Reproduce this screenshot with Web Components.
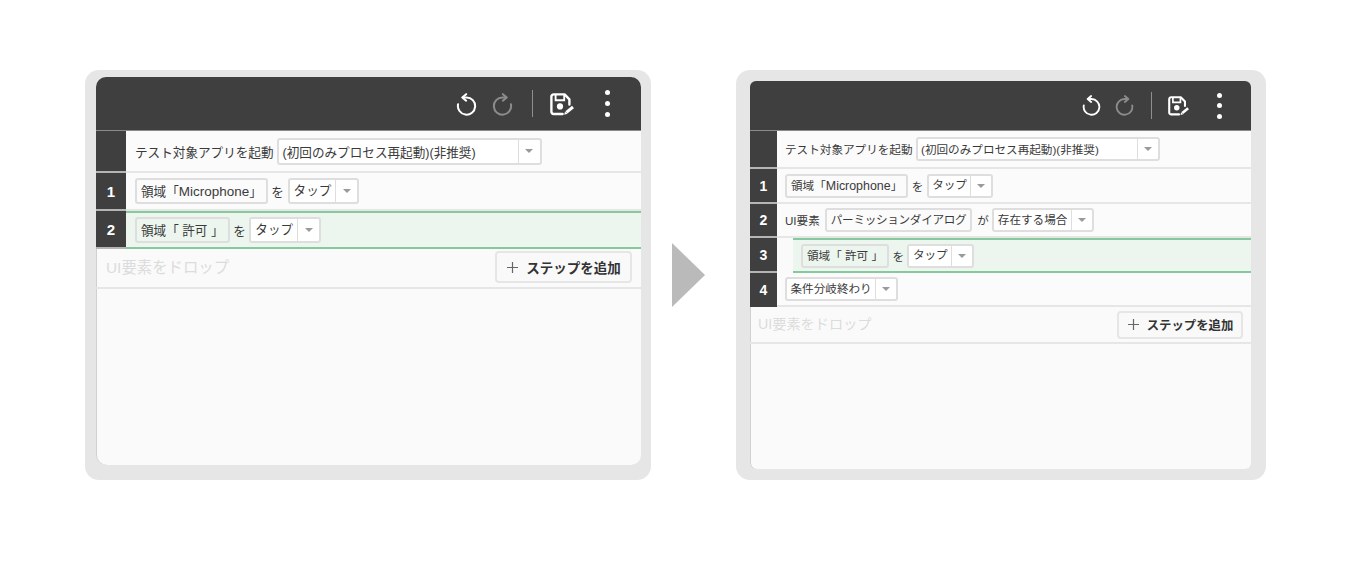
<!DOCTYPE html>
<html lang="ja">
<head>
<meta charset="utf-8">
<title>steps</title>
<style>
  html, body { margin: 0; background: #fff; }
  body { font-family: "Liberation Sans", "Noto Sans CJK JP", sans-serif; color: #3a3a3a; }
  main { display: flex; align-items: flex-start; padding: 70px 0 0 85px; }
  .lat { font-size: 1.07em; }
</style>
</head>
<body>
<main>
  <step-frame size="large">
    <step-row h="42">
      <span>テスト対象アプリを起動</span>
      <step-select w="265" style="margin-left:3px;height:27px;--top:0px">(初回のみプロセス再起動)(非推奨)</step-select>
    </step-row>
    <step-row n="1" h="38">
      <step-tag>領域「<span class="lat">Microphone</span>」</step-tag><span class="p">を</span><step-select style="--top:-2px">タップ</step-select>
    </step-row>
    <step-row n="2" h="38" active>
      <step-tag>領域「 許可 」</step-tag><span class="p">を</span><step-select style="--top:-2px">タップ</step-select>
    </step-row>
    <step-drop h="40">ステップを追加</step-drop>
  </step-frame>

  <step-arrow></step-arrow>

  <step-frame size="small">
    <step-row h="38">
      <span>テスト対象アプリを起動</span>
      <step-select w="244" style="margin-left:3px;--top:0px">(初回のみプロセス再起動)(非推奨)</step-select>
    </step-row>
    <step-row n="1" h="35">
      <step-tag>領域「<span class="lat">Microphone</span>」</step-tag><span class="p">を</span><step-select style="--top:-2px">タップ</step-select>
    </step-row>
    <step-row n="2" h="34">
      <span style="margin-right:5px">UI要素</span><step-tag style="letter-spacing:-.3px;margin-right:1.6px">パーミッションダイアログ</step-tag><span class="p">が</span><step-select>存在する場合</step-select>
    </step-row>
    <step-row n="3" h="35" active indent>
      <step-tag>領域「 許可 」</step-tag><span class="p">を</span><step-select style="--top:-2px">タップ</step-select>
    </step-row>
    <step-row n="4" h="34" last>
      <step-select>条件分岐終わり</step-select>
    </step-row>
    <step-drop h="37">ステップを追加</step-drop>
  </step-frame>
</main>

<script>
// toolbar icons
const undoIcon = `<svg viewBox="0 0 24 24" fill="none" stroke="currentColor" stroke-width="2.1" stroke-linecap="round" stroke-linejoin="round">
  <path d="M8.5 4.6H12a9 9 0 1 1-8.8 7.2"/>
  <path d="M11.6 1.2 7.6 4.6l4 3.4"/></svg>`;

const saveIcon = `<svg viewBox="0 0 24 23" fill="none">
  <path d="M19.4 11.5V6.4L14.6 1.4H3.6a2.2 2.2 0 0 0-2.2 2.2v15.2a2.2 2.2 0 0 0 2.2 2.2h9" stroke="#fff" stroke-width="2.4" stroke-linecap="round" stroke-linejoin="round"/>
  <path d="M5.6 2v5.2h8.6V2" stroke="#fff" stroke-width="1.9"/>
  <circle cx="10" cy="13.4" r="3.1" fill="#fff"/>
  <path d="M23 14 16.4 19.4" stroke="#fff" stroke-width="3"/>
  <path d="M14.2 21.8l.8-3.2 2.5 2.2z" fill="#fff"/>
</svg>`;

class StepFrame extends HTMLElement {
  constructor() {
    super();
    this.attachShadow({ mode: "open" }).innerHTML = `
      <style>
      :host { display: block; box-sizing: border-box; background: #e6e6e6; border-radius: 14px; flex: none; }
      :host([size="large"]) {
        width: 566px; height: 410px; padding: 7px 10px 15px 11px;
        --fs: 12.6px; --tool: 54px; --gutter: 30px; --pad: 9px; --num: 15px; --arrow: 21px; --sel-h: 26px; --sel-pad: 4px;
        --btn-w: 137px; --btn-h: 32px; --btn-r: 9px; --btn-fs: 13.5px; --drop-l: 10px; --drop-fs: 15.4px; --drop-pb: 2px; --hint-top: -1px; --p-gap: 3.6px;
      }
      :host([size="small"]) {
        width: 530px; height: 410px; padding: 11px 15px 11px 14px;
        --fs: 11.6px; --tool: 50px; --gutter: 27px; --pad: 8px; --num: 14px; --arrow: 20px; --sel-h: 24px; --sel-pad: 3.5px;
        --btn-w: 126px; --btn-h: 28px; --btn-r: 8px; --btn-fs: 12.4px; --drop-l: 8px; --drop-fs: 14.2px; --drop-pb: 0px; --hint-top: -2px; --p-gap: 3.4px;
      }
      .panel { height: 100%; background: #fafafa; border-radius: 10px; overflow: hidden; box-shadow: inset 1px 0 0 #d0d0d0; font-size: var(--fs); }
      :host([size="small"]) .panel { border-radius: 6px; }
      </style>
      <div class="panel">
        <step-toolbar size="${this.getAttribute("size")}"></step-toolbar>
        <slot></slot>
      </div>`;
  }
}

class StepToolbar extends HTMLElement {
  constructor() {
    super();
    this.attachShadow({ mode: "open" }).innerHTML = `
      <style>
      :host { display: flex; align-items: center; justify-content: flex-end; box-sizing: border-box; height: var(--tool); background: #3f3f3f; border-bottom: 1px solid #8a8a8a; color: #fff; }
      svg { display: block; }
      .undo, .redo { width: 23px; height: 23px; margin-top: 2px; }
      .redo { color: #8c8c8c; transform: scaleX(-1); margin-left: 13px; }
      .sep { width: 1px; height: 27px; background: #8f8f8f; margin: 0 17px 0 18px; }
      .save { width: 24px; height: 23px; margin-top: 2px; }
      .more { display: flex; flex-direction: column; gap: 6px; margin-left: 31px; margin-right: 31px; }
      .more i { display: block; width: 5px; height: 5px; border-radius: 50%; background: #fff; }
      :host([size="small"]) .undo, :host([size="small"]) .redo { width: 21px; height: 21px; margin-top: 0; }
      :host([size="small"]) .redo { margin-left: 12px; }
      :host([size="small"]) .sep { margin: 0 16px 0 16px; }
      :host([size="small"]) .save { width: 21px; height: 20px; margin-top: 1px; }
      :host([size="small"]) .more { gap: 5.5px; margin-left: 28px; margin-right: 29px; }
      </style>
      <span class="undo">${undoIcon}</span>
      <span class="redo">${undoIcon}</span>
      <span class="sep"></span>
      <span class="save">${saveIcon}</span>
      <span class="more"><i></i><i></i><i></i></span>`;
  }
}

class StepRow extends HTMLElement {
  constructor() {
    super();
    this.attachShadow({ mode: "open" }).innerHTML = `
      <style>
      :host { display: flex; box-sizing: border-box; align-items: stretch; }
      .num { box-sizing: border-box; flex: none; width: var(--gutter); background: #3f3f3f; border-bottom: 2px solid #b5b5b5; color: #fff; font-weight: bold; font-size: var(--num); display: flex; align-items: center; justify-content: center; }
      .body { flex: 1; min-width: 0; box-sizing: border-box; display: flex; align-items: center; padding-left: var(--pad); border-bottom: 2px solid #e6e6e6; background: #fbfbfb; }
      :host([last]) .num { border-bottom: 0; }
      :host([active]) .body { background: #ecf5ee; border-top: 2px solid #86c99c; border-bottom: 2px solid #86c99c; --tag-bg: #ecf5ee; }
      :host([indent]) .body { margin-left: 16px; }
      ::slotted(.p) { margin: 0 var(--p-gap); }
      </style>
      <div class="num"></div>
      <div class="body"><slot></slot></div>`;
  }
  connectedCallback() {
    this.style.height = this.getAttribute("h") + "px";
    this.shadowRoot.querySelector(".num").textContent = this.getAttribute("n") || "";
  }
}

class StepTag extends HTMLElement {
  constructor() {
    super();
    this.attachShadow({ mode: "open" }).innerHTML = `
      <style>
      :host { display: inline-flex; align-items: center; box-sizing: border-box; height: var(--sel-h); padding: 0 4px 2px; background: var(--tag-bg, #fbfbfb); border: 2px solid #dedede; border-radius: 3px; white-space: nowrap; }
      </style><span><slot></slot></span>`;
  }
}

class StepSelect extends HTMLElement {
  constructor() {
    super();
    this.attachShadow({ mode: "open" }).innerHTML = `
      <style>
      :host { display: inline-flex; box-sizing: border-box; height: var(--sel-h); background: #fff; border: 2px solid #dedede; border-radius: 3px; white-space: nowrap; flex: none; }
      .label { flex: 1; display: flex; align-items: center; padding: 0 var(--sel-pad); position: relative; top: var(--top, -1px); }
      .arrow { flex: none; width: var(--arrow); border-left: 1px solid #dedede; display: flex; align-items: center; justify-content: center; }
      .arrow i { width: 0; height: 0; border-left: 4.5px solid transparent; border-right: 4.5px solid transparent; border-top: 4.5px solid #9a9a9a; }
      </style>
      <span class="label"><slot></slot></span>
      <span class="arrow"><i></i></span>`;
  }
  connectedCallback() {
    const w = this.getAttribute("w");
    if (w) this.style.width = w + "px";
  }
}

class StepDrop extends HTMLElement {
  constructor() {
    super();
    this.attachShadow({ mode: "open" }).innerHTML = `
      <style>
      :host { display: flex; align-items: center; justify-content: space-between; box-sizing: border-box; padding: 0 var(--btn-r) var(--drop-pb) var(--drop-l); border-bottom: 2px solid #e6e6e6; }
      .hint { color: #dcdcdc; font-size: var(--drop-fs); position: relative; top: var(--hint-top); }
      button { display: flex; align-items: center; justify-content: center; gap: 7px; box-sizing: border-box; width: var(--btn-w); height: var(--btn-h); padding: 0; background: #f9f9f9; border: 2px solid #e6e6e6; border-radius: 4px; color: #333; font: bold var(--btn-fs) "Liberation Sans", "Noto Sans CJK JP", sans-serif; }
      svg { width: 13px; height: 13px; }
      </style>
      <span class="hint">UI要素をドロップ</span>
      <button><svg viewBox="0 0 13 13"><path d="M6.5 1v11M1 6.5h11" stroke="#666" stroke-width="1.2"/></svg><slot></slot></button>`;
  }
  connectedCallback() {
    this.style.height = this.getAttribute("h") + "px";
  }
}

class StepArrow extends HTMLElement {
  constructor() {
    super();
    this.attachShadow({ mode: "open" }).innerHTML = `
      <style>
      :host { display: block; flex: none; width: 33px; height: 64px; margin: 173px 31px 0 21px; background: #bababa; clip-path: polygon(0 0, 100% 50%, 0 100%); }
      </style>`;
  }
}

customElements.define("step-toolbar", StepToolbar);
customElements.define("step-frame", StepFrame);
customElements.define("step-row", StepRow);
customElements.define("step-tag", StepTag);
customElements.define("step-select", StepSelect);
customElements.define("step-drop", StepDrop);
customElements.define("step-arrow", StepArrow);
</script>
</body>
</html>
